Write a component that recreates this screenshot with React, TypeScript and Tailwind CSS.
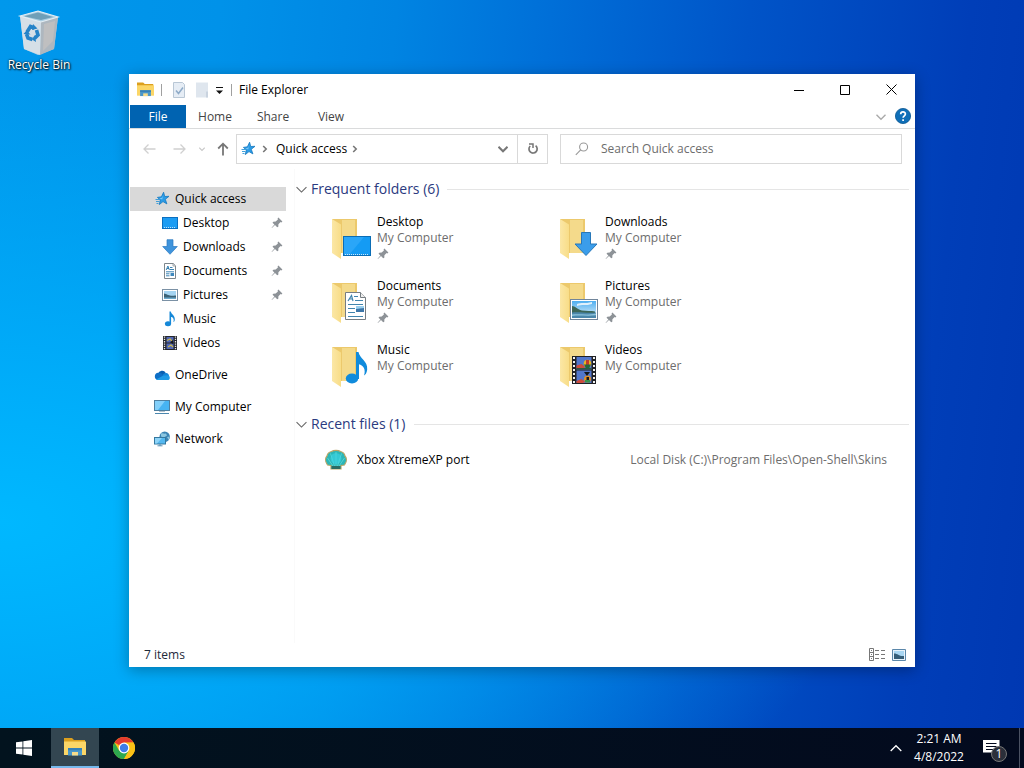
import { useState } from "react";
import type { ReactNode } from "react";

type IconName = "desktop" | "downloads" | "documents" | "pictures" | "music" | "videos";

interface Folder {
  name: string;
  icon: IconName;
  pinned: boolean;
}

const FOLDERS: Folder[] = [
  { name: "Desktop", icon: "desktop", pinned: true },
  { name: "Downloads", icon: "downloads", pinned: true },
  { name: "Documents", icon: "documents", pinned: true },
  { name: "Pictures", icon: "pictures", pinned: true },
  { name: "Music", icon: "music", pinned: false },
  { name: "Videos", icon: "videos", pinned: false },
];

const TABS = ["Home", "Share", "View"];

/* ---------- small icons ---------- */

function StarIcon() {
  return (
    <svg width="16" height="16" viewBox="0 0 16 16">
      <path d="m9.600 1.200 1.100 4.300 4.300-.2-3.700 3 1.600 4.600-3.900-2.300-3.700 3 1-4.600-2.900-2.600 4-.6z" fill="#2a9be6" stroke="#1679bf" strokeWidth=".8" strokeLinejoin="round" />
      <path d="M1.500 8.500h4M2 10.500h3.500M2.500 12.500h2" stroke="#2f97d8" strokeWidth=".9" />
      <path d="M9.400 4 8.200 6.800l-3 .5 3 1.200z" fill="#7cc8f7" />
    </svg>
  );
}

function PinIcon() {
  return (
    <svg width="12" height="12" viewBox="0 0 12 12" fill="#8d9297">
      <path d="M7.4.6 11.4 4.6 10.4 5.4 9.6 5.1 7.4 7.3 7.3 9.7 6.2 10.3 4 8 .9 11.1.6 10.8 3.4 7.5 1.5 5.7 2.3 4.8 4.7 4.6 6.9 2.4 6.6 1.6z" />
    </svg>
  );
}

function ChevronDown({ size = 10, color = "#444", weight = 1 }: { size?: number; color?: string; weight?: number }) {
  return (
    <svg width={size} height={size} viewBox="0 0 10 10" fill="none" stroke={color} strokeWidth={weight}>
      <path d="M.5 2.8 5 7.3l4.5-4.5" />
    </svg>
  );
}

function ChevronRight() {
  return (
    <svg width="6" height="8" viewBox="0 0 6 8" fill="none" stroke="#777" strokeWidth="1.6">
      <path d="M1.2 1 4.2 4 1.2 7" />
    </svg>
  );
}

function SmallIcon({ name }: { name: IconName }) {
  return (
    <svg width="16" height="16" viewBox="0 0 16 16">
      {name === "desktop" && (
        <>
          <rect x=".5" y="2.5" width="15" height="11" fill="#1c9cf3" stroke="#0b6fc0" />
          <path d="M2 12.5h11" stroke="#bfe2fb" strokeDasharray="1 1" />
        </>
      )}
      {name === "downloads" && <path d="M5 .7h6v6.8h4.3L8 15.3.7 7.5H5z" fill="#3f94dc" stroke="#2a79c0" strokeWidth=".7" />}
      {name === "documents" && (
        <>
          <path d="M2.5.5h8.7l2.3 2.3v12.7h-11z" fill="#fff" stroke="#7d868c" />
          <path d="M11 .5V3h2.5" fill="none" stroke="#7d868c" strokeWidth=".7" />
          <path d="m4.2 7 1.7-4L7.4 7M5 5.5h2M8 4.5h2.5M8 6.5h4M4 8.8h8M4 10.8h3.5M4 12.8h3.5" stroke="#2676ac" strokeWidth=".9" fill="none" />
          <path d="M8.5 10h3.5v3H8.5z" fill="#3e88bd" />
        </>
      )}
      {name === "pictures" && (
        <>
          <rect x=".5" y="2.5" width="15" height="11" fill="#fff" stroke="#7b91a5" />
          <path d="M2 4h12v8H2z" fill="#a4d4f2" />
          <path d="M2 6.5c3 .3 4 2 7 2.3 2 .1 3-.3 5-.3V12H2z" fill="#3b6276" />
          <path d="M2 10.5h12V12H2z" fill="#6ca9cc" />
        </>
      )}
      {name === "music" && (
        <>
          <ellipse cx="6" cy="12.8" rx="3.1" ry="2.5" fill="#1588d8" />
          <path d="M7.5.5h1.3c.5 3 4.400 3.700 4 8.200-.2 1.500-.9 2.300-1.300 2.400C12.300 7.600 10.700 6 9.100 6v6.800H7.500z" fill="#1588d8" />
        </>
      )}
      {name === "videos" && (
        <>
          <path d="M1 1h14v14H1z" fill="#25272c" />
          <path d="M2.5 1.5v13M13.5 1.5v13" stroke="#e8e8e8" strokeWidth="1.3" strokeDasharray="1.3 1" />
          <path d="M4.5 2h7v5.5h-7zM4.5 8.5h7V14h-7z" fill="#5269b5" />
          <path d="M5 5.5 8 4l2 2M6 12l3-2 2 2" stroke="#c9b64d" strokeWidth="1.2" fill="none" />
          <path d="M8 7.2 11 5v4z" fill="#18191c" />
        </>
      )}
    </svg>
  );
}

function OneDriveIcon() {
  return (
    <svg width="16" height="16" viewBox="0 0 16 16">
      <path d="M4 7a4.2 4.2 0 0 1 7.8-1L9 9.5 3 8z" fill="#0a5fb1" />
      <path d="M4.1 5.8c1.6-.3 3 .3 4 1.2l4.2 4.6L3.4 13A3.7 3.7 0 0 1 4.1 5.8z" fill="#0f6fc6" />
      <path d="M8.6 8.4c1-1.900 2.300-2.500 3.600-2.300 1.700.2 2.700 1.400 2.900 2.800L12 12z" fill="#1285d8" />
      <path d="M2 12.5 9 8.800l5.600-.6c2 1.600 1.500 4.800-1.100 4.800H3.600c-.7 0-1.300-.2-1.600-.5z" fill="#1f9be6" />
    </svg>
  );
}

function ComputerIcon() {
  return (
    <svg width="16" height="16" viewBox="0 0 16 16">
      <rect x=".5" y="1.5" width="15" height="10" fill="#47b4f2" stroke="#4f7f9f" />
      <path d="M1 2h10L4 11H1z" fill="#83d0fa" />
      <path d="M1 14.500h14" stroke="#4b87ae" />
      <path d="M5 12.5h6" stroke="#b5c4ce" />
    </svg>
  );
}

function NetworkIcon() {
  return (
    <svg width="16" height="16" viewBox="0 0 16 16">
      <circle cx="10.700" cy="5.800" r="5.200" fill="#3b84b4" />
      <path d="M7 2.500c2-.8 3 .6 5 0l1 2-3 2-3-1zM13 6l2.600-.5-1 3.500z" fill="#8cc6e0" />
      <rect x=".5" y="6.5" width="11" height="6.500" fill="#55b8f0" stroke="#34789f" />
      <path d="M1 7h7l-5 5.500H1z" fill="#8ed4f8" />
      <path d="M3.500 14.800h5M6 13v2" stroke="#5990b3" />
    </svg>
  );
}

function ExplorerIcon({ size }: { size: number }) {
  return (
    <svg width={size} height={size} viewBox="0 0 22 22">
      <path d="M0 2h8l2 2h11v4H0z" fill="#dc9f1e" />
      <path d="M0 5.500h22V19H0z" fill="#fbd667" />
      <path d="M4 12h14v7.500H4z" fill="#4a97c9" />
      <path d="M4 12h14v2.300H4z" fill="#3581b8" />
      <path d="M8 16h6v3.500H8z" fill="#f7dc8a" />
    </svg>
  );
}

function RecycleBinIcon() {
  return (
    <svg width="48" height="48" viewBox="0 0 48 48">
      <path d="m5 9 18-5 20 6-4 32-16 6L9 42z" fill="#c9d7e1" fillOpacity=".85" />
      <path d="M9 9.200 23 5.500l15 4.500-12 3z" fill="#6f9fb8" />
      <path d="M26 15 43 10l-4 32-14 6z" fill="#aeb7bf" />
      <path d="m5 9 21 6-1 33-16-6z" fill="#d5dfe7" />
      <path d="M29 17l11-3-2 20-10 10z" fill="#c6c2c0" fillOpacity=".7" />
      <path d="M5 9 23 4l20 6-17 5z" fill="none" stroke="#e4eef4" strokeWidth="1.200" />
      <g fill="none" stroke="#2583c8" strokeWidth="3.600">
        <path d="m12 25 3.500-5.500 4 1.500" />
        <path d="m21.500 23 1.500 5-3.500 3.500" />
        <path d="m17.500 32.500-4.500-1.500-1.500-4" />
      </g>
      <path d="m18 17 4.500 4.500-5.500 1.500zM20 28l-3 4.500 4 2.500zM8.500 27l3-3.500 4 4z" fill="#2583c8" />
    </svg>
  );
}

/* ---------- large folder icons ---------- */

function FolderIcon({ name }: { name: IconName }) {
  return (
    <svg width="48" height="48" viewBox="0 0 48 48">
      <defs>
        <linearGradient id={`flap-${name}`} x1="0" x2="1" y1="0" y2="0">
          <stop offset="0" stopColor="#fbe7a6" />
          <stop offset="1" stopColor="#f8dd88" />
        </linearGradient>
        <linearGradient id={`sky-${name}`} x1="0" x2="0" y1="0" y2="1">
          <stop offset="0" stopColor="#4eaef0" />
          <stop offset="1" stopColor="#e3f3fb" />
        </linearGradient>
      </defs>
      <path d="M7 5h25v34H7z" fill="#ecc96c" />
      <path d="M17 6h13v33H17z" fill="#f4da8b" />
      <path d="m7 5 9 5.500V45l-9-6z" fill={`url(#flap-${name})`} />
      {name === "desktop" && (
        <>
          <rect x="18.500" y="22.500" width="27" height="19" fill="#149bf4" stroke="#0b6db5" />
          <path d="M19 23h20L24 41h-5z" fill="#2aa6f8" />
          <path d="M20 40.500h24" stroke="#cbe8fc" strokeDasharray="1 1" />
        </>
      )}
      {name === "downloads" && <path d="M28.500 18.500h9V30h6.500L33 41.500 22 30h6.500z" fill="#3b9dea" stroke="#2777b8" />}
      {name === "documents" && (
        <>
          <path d="M20.500 14.500h15l5 5v22h-20z" fill="#fff" stroke="#767d82" />
          <path d="M35.500 14.500v5h5" fill="#eee" stroke="#767d82" />
          <path d="m23 23 3.500-5.500L28 23M24.500 21h3M29 18.500h4M30 22.500h8M23 26.500h15M23 30.500h7M23 34.500h7M23 38.500h15" fill="none" stroke="#4285ad" strokeWidth="1.200" />
          <path d="M31 28h8v6h-8z" fill="#3d76a8" />
          <path d="M31 28h8v2l-8 1z" fill="#9bd0ee" />
        </>
      )}
      {name === "pictures" && (
        <>
          <rect x="17.500" y="21.500" width="27" height="20" fill="#fff" stroke="#71859a" />
          <path d="M19 23h24v17H19z" fill="url(#sky-pictures)" />
          <path d="M24 26c4-2 8 0 15-2v2c-6 2-10 0-15 2z" fill="#dff0fb" />
          <path d="M19 28c3 0 5 3 10 4.500 5 .8 9 0 13 1v2H19z" fill="#3d6657" />
          <path d="M19 34.500c7-1 15 1 24 0V40H19z" fill="#4b87ab" />
          <path d="M19 36.500c8-1 14 1 24-1v1.800c-10 1.200-15-.5-24 .7z" fill="#8fc4dc" />
        </>
      )}
      {name === "music" && (
        <>
          <ellipse cx="27" cy="36.500" rx="6.200" ry="5" fill="#108bdc" />
          <path d="M31 10h2.500c1 6.500 9.500 9 8.700 17.500-.3 3.500-2 5.500-3.200 6 2.300-6.500-1.200-10.500-5-11.300V37h-3z" fill="#108bdc" />
        </>
      )}
      {name === "videos" && (
        <>
          <path d="M19 14h24v28H19z" fill="#202125" />
          <path d="M21 15v27M41 15v27" stroke="#f2f2f2" strokeWidth="2" strokeDasharray="2 2" />
          <path d="M23.500 15h15v12.500h-15zM23.500 28.500h15V41h-15z" fill="#5277cc" />
          <path d="m23.500 23.500 5-1.500 4 3-3 1.500h-6zM23.500 39l5-2 4 3-3 1h-6z" fill="#cf4c3b" />
          <path d="M23.500 26h15v1.500h-15z" fill="#315a3e" />
          <circle cx="34.500" cy="21.500" r="3.800" fill="#e8b423" />
          <path d="M33 18h3v7h-3z" fill="#c23a2c" />
          <path d="M31 22.500h7l-2 4h-3z" fill="#25683f" />
          <circle cx="34.500" cy="37" r="3.500" fill="#e2902a" />
          <path d="M31 30h6l-3 4zM33.500 35h2.500v5h-2.500z" fill="#16171a" />
          <path d="M32 38h5v2.500h-5z" fill="#37914d" />
        </>
      )}
    </svg>
  );
}

function ShellIcon() {
  return (
    <svg width="24" height="24" viewBox="0 0 24 24">
      <path d="M7 17.500 3.500 17C.5 13 1.500 9.500 3 8c.5-3 2.500-4 4.500-4.500 2-1.500 7-1.500 9 0 2 .5 4 1.500 4.500 4.500 1.500 1.500 2.500 5-.5 9L17 17.500V21H7z" fill="#2bb6b8" stroke="#b9a566" strokeWidth="1.200" />
      <path d="M12 18V4M10.500 18 6.500 5.500M13.500 18l4-12.500M9 18l-5.500-8M15 18l5.500-8" stroke="#5fd9d8" strokeWidth=".8" fill="none" />
      <circle cx="12" cy="10.500" r="5.500" fill="#3ad6e6" fillOpacity=".6" />
      <path d="M7.500 18h9v3h-9z" fill="#2b6c63" />
    </svg>
  );
}

/* ---------- window pieces ---------- */

function NavItem({ label, icon, nested, pinned, selected }: { label: string; icon: ReactNode; nested?: boolean; pinned?: boolean; selected?: boolean }) {
  return (
    <a
      href="#"
      className={`flex h-6 items-center gap-[5px] pr-[3px] ${nested ? "pl-8" : "pl-6"} ${selected ? "bg-[#d9d9d9]" : "hover:bg-[#e5f3ff]"}`}
    >
      {icon}
      <span className="flex-1">{label}</span>
      {pinned && <PinIcon />}
    </a>
  );
}

function SectionTitle({ title, open, onToggle }: { title: string; open: boolean; onToggle: () => void }) {
  return (
    <h2 className="flex items-center gap-2">
      <button onClick={onToggle} aria-expanded={open} className="flex items-center gap-1 text-sm leading-5 text-[#2b3a80]">
        <ChevronDown size={11} color="#666" />
        {title}
      </button>
      <span className="h-px flex-1 bg-[#e5e5e5]" />
    </h2>
  );
}

function FolderTile({ folder }: { folder: Folder }) {
  return (
    <button className="flex h-16 w-[228px] items-start gap-1 text-left hover:bg-[#e5f3ff]">
      <FolderIcon name={folder.icon} />
      <span className="flex flex-col leading-4">
        <span>{folder.name}</span>
        <span className="text-[#6d6d6d]">My Computer</span>
        {folder.pinned && (
          <span className="flex h-4 items-center">
            <PinIcon />
          </span>
        )}
      </span>
    </button>
  );
}

function TitleBar() {
  return (
    <header className="flex h-[31px] shrink-0 items-center pr-px pl-2">
      <ExplorerIcon size={17} />
      <span className="ml-[7px] h-3 w-px bg-[#a0a0a0]" />
      <button aria-label="Properties" className="ml-[10px]">
        <svg width="14" height="16" viewBox="0 0 14 16">
          <path d="M1.500.5h9l2 2v13h-11z" fill="#e6edf5" stroke="#b9c7d5" />
          <path d="m4 8.500 2.500 3 4.500-6" fill="none" stroke="#8fabc8" strokeWidth="1.500" />
        </svg>
      </button>
      <button aria-label="New folder" className="ml-[9px]">
        <svg width="14" height="16" viewBox="0 0 14 16">
          <path d="M1 .500h12v15H1z" fill="#dfe6ee" />
          <path d="M11 9.500v6h2v-6z" fill="#c9d3df" />
        </svg>
      </button>
      <button aria-label="Customize Quick Access Toolbar" className="ml-[7px]">
        <svg width="7" height="8" viewBox="0 0 7 8">
          <path d="M0 1.500h7" stroke="#111" />
          <path d="M0 4.500h7L3.500 8z" fill="#111" />
        </svg>
      </button>
      <span className="ml-2 h-3 w-px bg-[#a0a0a0]" />
      <h1 className="ml-[7px] flex-1">File Explorer</h1>
      <button aria-label="Minimize" className="flex h-full w-[46px] items-center justify-center hover:bg-[#e5e5e5]">
        <svg width="10" height="10" viewBox="0 0 10 10"><path d="M0 5.500h10" stroke="#000" /></svg>
      </button>
      <button aria-label="Maximize" className="flex h-full w-[46px] items-center justify-center hover:bg-[#e5e5e5]">
        <svg width="10" height="10" viewBox="0 0 10 10"><path d="M.5.5h9v9h-9z" fill="none" stroke="#000" /></svg>
      </button>
      <button aria-label="Close" className="flex h-full w-[46px] items-center justify-center hover:bg-[#e81123]">
        <svg width="11" height="11" viewBox="0 0 11 11"><path d="m.5.5 10 10M10.500.5l-10 10" stroke="#000" /></svg>
      </button>
    </header>
  );
}

function Ribbon() {
  return (
    <div className="flex h-6 shrink-0 items-center border-b border-[#dadbdc] text-[#444]">
      <button className="ml-px h-full w-14 bg-[#0063b1] text-white">File</button>
      {TABS.map((tab) => (
        <button key={tab} className="h-full w-[58px] hover:bg-[#f5f6f7]">{tab}</button>
      ))}
      <button aria-label="Expand the Ribbon" className="ml-auto">
        <ChevronDown color="#aaa" weight={1.4} />
      </button>
      <button aria-label="Help" className="mr-1 ml-[9px] pb-px">
        <svg width="16" height="16" viewBox="0 0 16 16">
          <circle cx="8" cy="8" r="7.600" fill="#0f6fb8" stroke="#0a5792" strokeWidth=".8" />
          <path d="M5.700 6.200C5.700 3.200 10.400 3.300 10.400 6c0 1.800-2.300 1.800-2.300 3.800M8.100 11.200v1.700" fill="none" stroke="#fff" strokeWidth="1.700" />
        </svg>
      </button>
    </div>
  );
}

function AddressBar() {
  return (
    <div className="flex h-10 shrink-0 items-center pr-[13px] pl-[14px]">
      <button aria-label="Back" className="w-[14px]">
        <svg width="13" height="12" viewBox="0 0 13 12" fill="none" stroke="#d0d0d0" strokeWidth="1.300"><path d="M12.500 6H1M5.500 1.500 1 6l4.500 4.500" /></svg>
      </button>
      <button aria-label="Forward" className="ml-4 w-[14px]">
        <svg width="13" height="12" viewBox="0 0 13 12" fill="none" stroke="#d0d0d0" strokeWidth="1.300"><path d="M.5 6H12M7.500 1.500 12 6l-4.500 4.500" /></svg>
      </button>
      <button aria-label="Recent locations" className="ml-3">
        <ChevronDown size={6} color="#c8c8c8" weight={1.8} />
      </button>
      <button aria-label="Up" className="ml-3">
        <svg width="12" height="14" viewBox="0 0 12 14" fill="none" stroke="#777" strokeWidth="1.800"><path d="M6 13.500V2M1.200 6.500 6 1.700l4.800 4.800" /></svg>
      </button>
      <div className="ml-[7px] flex h-[30px] min-w-0 flex-[310] border border-[#d9d9d9]">
        <div className="flex flex-1 items-center pl-[3px]">
          <StarIcon />
          <span className="ml-1 flex w-[9px] justify-center"><ChevronRight /></span>
          <button className="ml-[7px]">Quick access</button>
          <span className="ml-[3px] flex w-[9px] justify-center"><ChevronRight /></span>
        </div>
        <button aria-label="Previous locations" className="flex w-7 items-center justify-center">
          <ChevronDown color="#777" weight={2} />
        </button>
        <button aria-label="Refresh" className="flex w-[30px] items-center justify-center border-l border-[#d9d9d9]">
          <svg width="12" height="12" viewBox="0 0 12 12" fill="none" stroke="#777" strokeWidth="1.700">
            <path d="M8.600 2.700A4.100 4.100 0 1 1 3.200 3" />
            <path d="M2 1h4v4" strokeWidth="1.500" />
          </svg>
        </button>
      </div>
      <label className="ml-3 flex h-[30px] min-w-0 flex-[326] items-center gap-3 border border-[#d9d9d9] pl-[14px]">
        <svg width="14" height="14" viewBox="0 0 14 14" fill="none" stroke="#999" strokeWidth="1.100" className="shrink-0">
          <circle cx="8.600" cy="5" r="4" />
          <path d="M5.700 7.900.8 12.800" />
        </svg>
        <input type="search" aria-label="Search Quick access" placeholder="Search Quick access" className="w-full min-w-0 outline-none placeholder:text-[#6d6d6d]" />
      </label>
    </div>
  );
}

function Explorer() {
  const [showFolders, setShowFolders] = useState(true);
  const [showFiles, setShowFiles] = useState(true);

  return (
    <section className="absolute top-[74px] right-[109px] bottom-[61px] left-[129px] flex flex-col bg-white shadow-[0_3px_14px_rgba(0,0,0,0.3)]">
      <TitleBar />
      <Ribbon />
      <AddressBar />
      <div className="flex min-h-0 flex-1">
        <nav className="w-[166px] shrink-0 border-r border-[#fafafa] pt-[18px] pr-2 pl-px">
          <NavItem label="Quick access" icon={<StarIcon />} selected />
          {FOLDERS.map((f) => (
            <NavItem key={f.name} label={f.name} icon={<SmallIcon name={f.icon} />} pinned={f.pinned} nested />
          ))}
          <div className="mt-2 flex flex-col gap-2">
            <NavItem label="OneDrive" icon={<OneDriveIcon />} />
            <NavItem label="My Computer" icon={<ComputerIcon />} />
            <NavItem label="Network" icon={<NetworkIcon />} />
          </div>
        </nav>
        <main className="min-w-0 flex-1 overflow-hidden pt-[10px] pr-[6px] pl-px">
          <SectionTitle title="Frequent folders (6)" open={showFolders} onToggle={() => setShowFolders(!showFolders)} />
          {showFolders && (
            <div className="mt-[15px] ml-[29px] grid grid-cols-[228px_228px]">
              {FOLDERS.map((f) => (
                <FolderTile key={f.name} folder={f} />
              ))}
            </div>
          )}
          <div className="mt-2">
            <SectionTitle title="Recent files (1)" open={showFiles} onToggle={() => setShowFiles(!showFiles)} />
          </div>
          {showFiles && (
            <button className="mt-[14px] flex h-6 w-full items-center gap-[9px] pr-[22px] pl-7 text-left hover:bg-[#e5f3ff]">
              <ShellIcon />
              <span className="flex-1">Xbox XtremeXP port</span>
              <span className="text-[#6d6d6d]">Local Disk (C:)\Program Files\Open-Shell\Skins</span>
            </button>
          )}
        </main>
      </div>
      <footer className="flex h-6 shrink-0 items-center pr-[9px] pb-px pl-[15px] text-[#1e2a3a]">
        <span className="flex-1">7 items</span>
        <button aria-label="Details view">
          <svg width="17" height="14" viewBox="0 0 17 14" fill="none" stroke="#777">
            <path d="M.5.500h4v12h-4zM.5 4.500h4M.5 8.500h4" />
            <path d="M6 2.500h4M12 2.500h4M6 6.500h4M12 6.500h4M6 10.500h4M12 10.500h4" />
            <path d="M2 2.500h1M2 6.500h1M2 10.500h1" />
          </svg>
        </button>
        <button aria-label="Large icons view" className="ml-[6px]">
          <svg width="14" height="12" viewBox="0 0 14 12">
            <path d="M.5.500h13v11H.5z" fill="#e8f3fb" stroke="#5b87aa" />
            <path d="M2 2h10v8H2z" fill="#a8d6f2" />
            <path d="M2 4.500c4 0 5 3 10 2.500V10H2z" fill="#365e78" />
          </svg>
        </button>
      </footer>
    </section>
  );
}

function Taskbar() {
  return (
    <footer className="flex h-10 shrink-0 items-stretch bg-linear-to-r from-[#02131e] to-[#030a1e] text-white">
      <button aria-label="Start" className="flex w-[51px] items-center pl-4">
        <svg width="16" height="16" viewBox="0 0 16 16" fill="#fff">
          <path d="m0 2.300 6.500-.9v6.200H0zM7.300 1.300 16 0v7.600H7.300zM0 8.400h6.500v6.200L0 13.700zM7.300 8.400H16V16l-8.700-1.300z" />
        </svg>
      </button>
      <button aria-label="File Explorer" className="flex w-12 items-center justify-center border-b-2 border-[#76b9ed] bg-[#334651]">
        <ExplorerIcon size={22} />
      </button>
      <button aria-label="Google Chrome" className="flex w-[50px] items-center justify-center">
        <svg width="22" height="22" viewBox="0 0 22 22">
          <circle cx="11" cy="11" r="11" fill="#fbc116" />
          <path d="M11 11 1.500 5.500A11 11 0 0 1 20.500 5.500L11 6z" fill="#e33b2e" />
          <path d="M1.470 5.500A11 11 0 0 0 11 22l4.800-8.200L11 11 6.200 13.700z" fill="#2da94f" />
          <path d="M20.530 5.500A11 11 0 0 1 11 22l4.800-8.200L11 5.500z" fill="#fbc116" />
          <circle cx="11" cy="11" r="5.400" fill="#fff" />
          <circle cx="11" cy="11" r="4.200" fill="#3f7de8" />
        </svg>
      </button>
      <button aria-label="Show hidden icons" className="ml-auto flex items-center">
        <svg width="12" height="8" viewBox="0 0 12 8" fill="none" stroke="#fff" strokeWidth="1.300"><path d="m.7 7 5.300-5.300L11.300 7" /></svg>
      </button>
      <button className="ml-2 flex w-[58px] flex-col items-center justify-center leading-[18px]">
        <time>2:21 AM</time>
        <time>4/8/2022</time>
      </button>
      <button aria-label="Notifications" className="relative ml-[15px] w-[35px]">
        <svg width="17" height="17" viewBox="0 0 17 17" className="mt-px">
          <path d="M0 0h16.500v12.500H12L9 16v-3.500H0z" fill="#fff" />
          <path d="M3 3.500h10.500M3 6.500h10.500M3 9.500h7" stroke="#030a1e" />
        </svg>
        <span className="absolute top-[18px] left-2 flex size-4 items-center justify-center rounded-full border border-[#777] bg-[#2b2f3a] text-xs">1</span>
      </button>
      <button aria-label="Show desktop" className="ml-px w-[5px] border-l border-[#4b5263]" />
    </footer>
  );
}

export default function App() {
  return (
    <div className="flex h-screen flex-col overflow-hidden bg-[radial-gradient(ellipse_at_0%_68%,#00b8ff_0%,rgba(0,176,252,0.8)_22%,rgba(0,160,245,0)_60%),linear-gradient(96deg,#0098ec_0%,#0092e9_20%,#0084e2_36%,#006fd8_50%,#0054c8_68%,#003eb8_88%,#0038b2_100%)] font-['Open_Sans',sans-serif] text-xs text-black">
      <div className="relative min-h-0 flex-1">
        <button className="absolute top-[7px] left-1 flex w-[70px] flex-col items-center text-white">
          <RecycleBinIcon />
          <span className="leading-5 [text-shadow:1px_1px_2px_#000,0_0_2px_#000]">Recycle Bin</span>
        </button>
        <Explorer />
      </div>
      <Taskbar />
    </div>
  );
}
